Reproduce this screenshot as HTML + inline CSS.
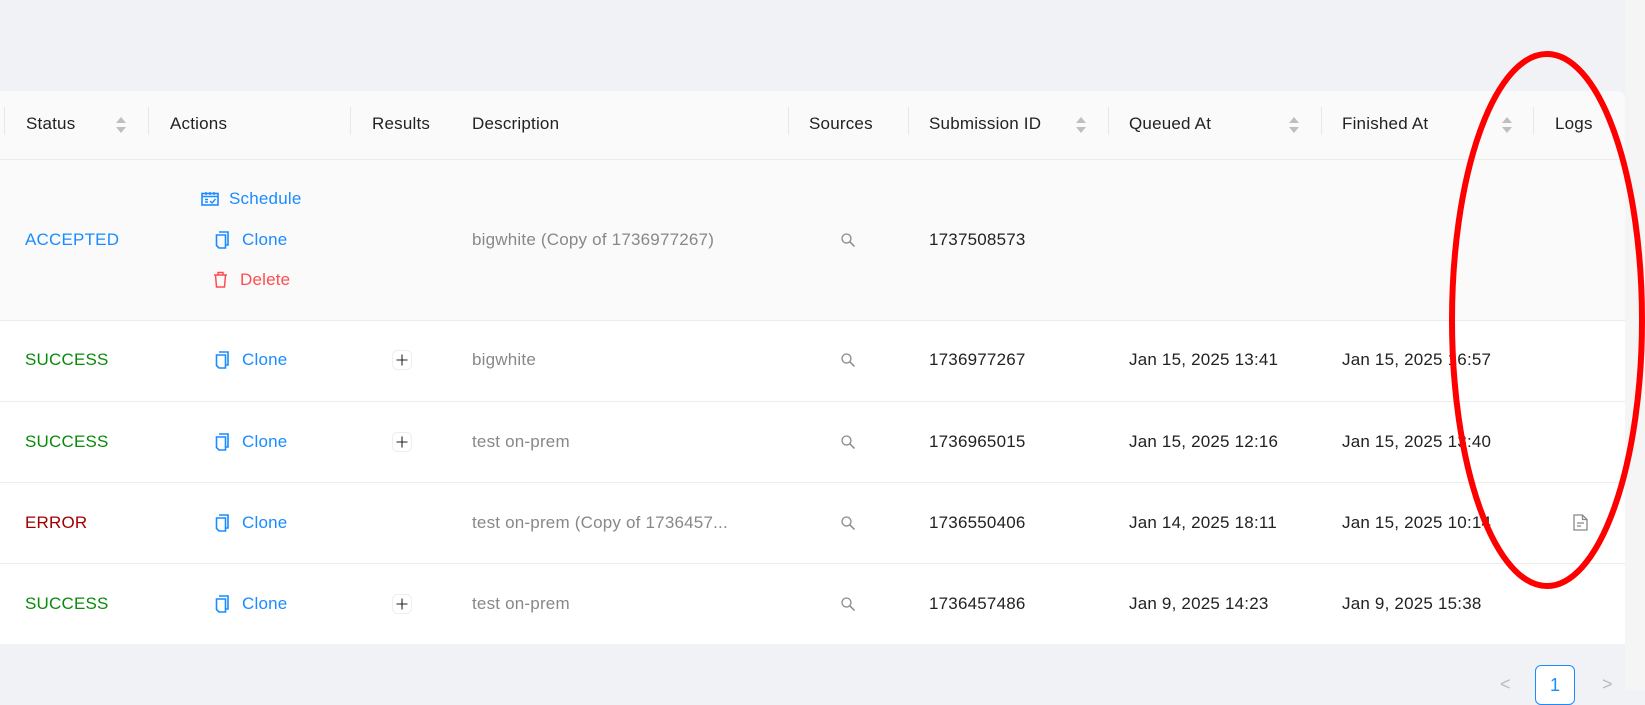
<!DOCTYPE html>
<html><head><meta charset="utf-8">
<style>
*{margin:0;padding:0;box-sizing:border-box}
body{width:1645px;height:690px;overflow:hidden;background:#f0f2f5;font-family:"Liberation Sans",Arial,sans-serif;font-size:17px;color:#222;position:relative}
.strip{position:absolute;left:1625px;top:0;width:20px;height:690px;background:#f5f5f5}
.tbl{position:absolute;left:0;top:91px;width:1625px;height:553px;background:#fff;border-top-right-radius:8px;overflow:hidden}
.hdr{position:absolute;left:0;top:0;width:1625px;height:69px;background:#fafafa;border-bottom:1px solid #ececec}
.row1{position:absolute;left:0;top:69px;width:1625px;height:161px;background:#fafafa;border-bottom:1px solid #ececec}
.line{position:absolute;left:0;width:1625px;height:1px;background:#ececec}
.t{position:absolute;white-space:nowrap;line-height:20px;transform:translateY(-10px);letter-spacing:0.2px}
.div{position:absolute;top:16px;width:1px;height:28px;background:#e8e8e8}
.sort{position:absolute;width:12px;height:20px;transform:translateY(-10px)}
.blue{color:#1a8cff}.green{color:#0a8a0a}.red{color:#a00000}.del{color:#ff4d4f}.gray{color:#888}
svg.i{position:absolute}
</style></head><body>
<div class="strip"></div>
<div class="tbl">
 <div class="hdr"></div>
 <div class="row1"></div>
 <div class="line" style="top:310px"></div>
 <div class="line" style="top:391px"></div>
 <div class="line" style="top:472px"></div>
</div>
<div class="div" style="left:4px;top:107px"></div>
<div class="div" style="left:148px;top:107px"></div>
<div class="div" style="left:350px;top:107px"></div>
<div class="div" style="left:788px;top:107px"></div>
<div class="div" style="left:908px;top:107px"></div>
<div class="div" style="left:1108px;top:107px"></div>
<div class="div" style="left:1321px;top:107px"></div>
<div class="div" style="left:1533px;top:107px"></div>
<div class="t" style="left:26px;top:124px">Status</div>
<div class="t" style="left:170px;top:124px">Actions</div>
<div class="t" style="left:372px;top:124px">Results</div>
<div class="t" style="left:472px;top:124px">Description</div>
<div class="t" style="left:809px;top:124px">Sources</div>
<div class="t" style="left:929px;top:124px">Submission ID</div>
<div class="t" style="left:1129px;top:124px">Queued At</div>
<div class="t" style="left:1342px;top:124px">Finished At</div>
<div class="t" style="left:1555px;top:124px">Logs</div>
<svg class="sort" style="left:115px;top:125px" viewBox="0 0 12 20"><path d="M1 8L6 2L11 8Z M1 12L6 18L11 12Z" fill="#bfbfbf"/></svg>
<svg class="sort" style="left:1075px;top:125px" viewBox="0 0 12 20"><path d="M1 8L6 2L11 8Z M1 12L6 18L11 12Z" fill="#bfbfbf"/></svg>
<svg class="sort" style="left:1288px;top:125px" viewBox="0 0 12 20"><path d="M1 8L6 2L11 8Z M1 12L6 18L11 12Z" fill="#bfbfbf"/></svg>
<svg class="sort" style="left:1501px;top:125px" viewBox="0 0 12 20"><path d="M1 8L6 2L11 8Z M1 12L6 18L11 12Z" fill="#bfbfbf"/></svg>

<div class="t blue" style="left:25px;top:240px">ACCEPTED</div>
<svg class="i" style="left:201px;top:191px" width="18" height="15" viewBox="0 0 18 15"><rect x="1" y="2.5" width="16" height="11.5" fill="none" stroke="#1a8cff" stroke-width="1.6"/><path d="M1 5.5H17M5 1V4M9 1V4M13 1V4M4 8.5H7M4 11H7M9 10L11 12L14.5 8" fill="none" stroke="#1a8cff" stroke-width="1.4"/></svg>
<div class="t blue" style="left:229px;top:199px">Schedule</div>
<svg class="i" style="left:215px;top:231px" width="15" height="18" viewBox="0 0 15 18"><path d="M4 1H13V14H11" fill="none" stroke="#1a8cff" stroke-width="1.6"/><path d="M1.5 4H10.5V17H4L1.5 14.5Z" fill="none" stroke="#1a8cff" stroke-width="1.6"/></svg>
<div class="t blue" style="left:242px;top:240px">Clone</div>
<svg class="i" style="left:213px;top:271px" width="15" height="17" viewBox="0 0 15 17"><path d="M1 4H14M5 4V1.5H10V4M2.5 4L3.5 16H11.5L12.5 4" fill="none" stroke="#ff4d4f" stroke-width="1.5"/></svg>
<div class="t del" style="left:240px;top:280px">Delete</div>
<div class="t gray" style="left:472px;top:240px">bigwhite (Copy of 1736977267)</div>
<div class="t" style="left:929px;top:240px">1737508573</div>

<div class="t green" style="left:25px;top:360px">SUCCESS</div>
<div class="t green" style="left:25px;top:442px">SUCCESS</div>
<div class="t red" style="left:25px;top:523px">ERROR</div>
<div class="t green" style="left:25px;top:604px">SUCCESS</div>

<div class="t blue" style="left:242px;top:360px">Clone</div>
<div class="t blue" style="left:242px;top:442px">Clone</div>
<div class="t blue" style="left:242px;top:523px">Clone</div>
<div class="t blue" style="left:242px;top:604px">Clone</div>
<svg class="i" style="left:215px;top:351px" width="15" height="18" viewBox="0 0 15 18"><path d="M4 1H13V14H11" fill="none" stroke="#1a8cff" stroke-width="1.6"/><path d="M1.5 4H10.5V17H4L1.5 14.5Z" fill="none" stroke="#1a8cff" stroke-width="1.6"/></svg>
<svg class="i" style="left:215px;top:433px" width="15" height="18" viewBox="0 0 15 18"><path d="M4 1H13V14H11" fill="none" stroke="#1a8cff" stroke-width="1.6"/><path d="M1.5 4H10.5V17H4L1.5 14.5Z" fill="none" stroke="#1a8cff" stroke-width="1.6"/></svg>
<svg class="i" style="left:215px;top:514px" width="15" height="18" viewBox="0 0 15 18"><path d="M4 1H13V14H11" fill="none" stroke="#1a8cff" stroke-width="1.6"/><path d="M1.5 4H10.5V17H4L1.5 14.5Z" fill="none" stroke="#1a8cff" stroke-width="1.6"/></svg>
<svg class="i" style="left:215px;top:595px" width="15" height="18" viewBox="0 0 15 18"><path d="M4 1H13V14H11" fill="none" stroke="#1a8cff" stroke-width="1.6"/><path d="M1.5 4H10.5V17H4L1.5 14.5Z" fill="none" stroke="#1a8cff" stroke-width="1.6"/></svg>

<svg class="i" style="left:392px;top:350px" width="20" height="20" viewBox="0 0 20 20"><rect x="0.5" y="0.5" width="19" height="19" rx="5" fill="#fff" stroke="#eee"/><path d="M10 4.5V15.5M4.5 10H15.5" stroke="#222" stroke-width="1.1"/></svg>
<svg class="i" style="left:392px;top:432px" width="20" height="20" viewBox="0 0 20 20"><rect x="0.5" y="0.5" width="19" height="19" rx="5" fill="#fff" stroke="#eee"/><path d="M10 4.5V15.5M4.5 10H15.5" stroke="#222" stroke-width="1.1"/></svg>
<svg class="i" style="left:392px;top:594px" width="20" height="20" viewBox="0 0 20 20"><rect x="0.5" y="0.5" width="19" height="19" rx="5" fill="#fff" stroke="#eee"/><path d="M10 4.5V15.5M4.5 10H15.5" stroke="#222" stroke-width="1.1"/></svg>

<div class="t gray" style="left:472px;top:360px">bigwhite</div>
<div class="t gray" style="left:472px;top:442px">test on-prem</div>
<div class="t gray" style="left:472px;top:523px">test on-prem (Copy of 1736457...</div>
<div class="t gray" style="left:472px;top:604px">test on-prem</div>

<svg class="i" style="left:840px;top:232px" width="16" height="16" viewBox="0 0 16 16"><circle cx="6.5" cy="6.5" r="4.5" fill="none" stroke="#888" stroke-width="1.3"/><path d="M10 10L14.5 14.5" stroke="#888" stroke-width="1.5"/></svg>
<svg class="i" style="left:840px;top:352px" width="16" height="16" viewBox="0 0 16 16"><circle cx="6.5" cy="6.5" r="4.5" fill="none" stroke="#888" stroke-width="1.3"/><path d="M10 10L14.5 14.5" stroke="#888" stroke-width="1.5"/></svg>
<svg class="i" style="left:840px;top:434px" width="16" height="16" viewBox="0 0 16 16"><circle cx="6.5" cy="6.5" r="4.5" fill="none" stroke="#888" stroke-width="1.3"/><path d="M10 10L14.5 14.5" stroke="#888" stroke-width="1.5"/></svg>
<svg class="i" style="left:840px;top:515px" width="16" height="16" viewBox="0 0 16 16"><circle cx="6.5" cy="6.5" r="4.5" fill="none" stroke="#888" stroke-width="1.3"/><path d="M10 10L14.5 14.5" stroke="#888" stroke-width="1.5"/></svg>
<svg class="i" style="left:840px;top:596px" width="16" height="16" viewBox="0 0 16 16"><circle cx="6.5" cy="6.5" r="4.5" fill="none" stroke="#888" stroke-width="1.3"/><path d="M10 10L14.5 14.5" stroke="#888" stroke-width="1.5"/></svg>

<div class="t" style="left:929px;top:360px">1736977267</div>
<div class="t" style="left:929px;top:442px">1736965015</div>
<div class="t" style="left:929px;top:523px">1736550406</div>
<div class="t" style="left:929px;top:604px">1736457486</div>

<div class="t" style="left:1129px;top:360px">Jan 15, 2025 13:41</div>
<div class="t" style="left:1129px;top:442px">Jan 15, 2025 12:16</div>
<div class="t" style="left:1129px;top:523px">Jan 14, 2025 18:11</div>
<div class="t" style="left:1129px;top:604px">Jan 9, 2025 14:23</div>

<div class="t" style="left:1342px;top:360px">Jan 15, 2025 16:57</div>
<div class="t" style="left:1342px;top:442px">Jan 15, 2025 13:40</div>
<div class="t" style="left:1342px;top:523px">Jan 15, 2025 10:14</div>
<div class="t" style="left:1342px;top:604px">Jan 9, 2025 15:38</div>

<svg class="i" style="left:1573px;top:514px" width="15" height="17" viewBox="0 0 15 17"><path d="M1 1H9.5L14 5.5V16H1Z M9.5 1V5.5H14" fill="none" stroke="#888" stroke-width="1.3"/><path d="M4 9H11M4 12H8" stroke="#888" stroke-width="1.3"/></svg>

<div class="t" style="left:1500px;top:684px;color:#bbb;font-size:18px">&lt;</div>
<div style="position:absolute;left:1535px;top:665px;width:40px;height:40px;border:1px solid #1a8cff;border-radius:6px;background:#fff;color:#1a8cff;text-align:center;line-height:38px;font-size:18px">1</div>
<div class="t" style="left:1602px;top:684px;color:#bbb;font-size:18px">&gt;</div>

<svg style="position:absolute;left:0;top:0" width="1645" height="690"><ellipse cx="1547" cy="320" rx="95" ry="266" fill="none" stroke="#ff0000" stroke-width="6"/></svg>
</body></html>
